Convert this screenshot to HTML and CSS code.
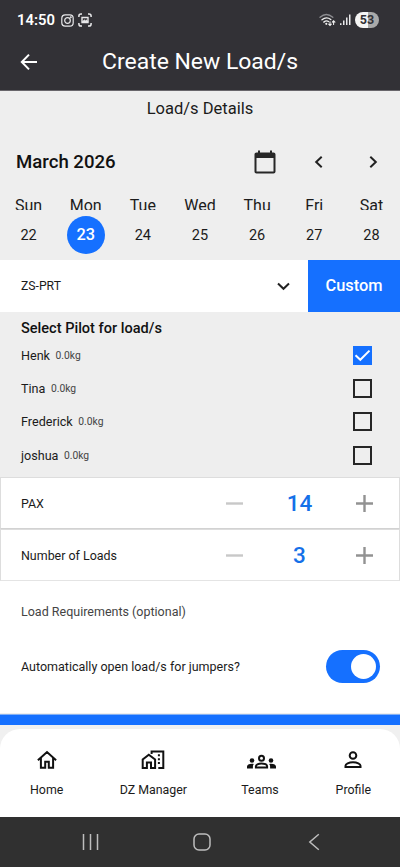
FILE: index.html
```html
<!DOCTYPE html>
<html lang="en">
<head>
<meta charset="utf-8">
<meta name="viewport" content="width=device-width, initial-scale=1">
<title>Create New Load/s</title>
<link rel="stylesheet" href="styles.css">
</head>
<body>
<div class="screen">
  <div class="top">
    <div class="status">
      <span class="clock">14:50</span>
      <svg class="insta" width="13" height="13" viewBox="0 0 13 13" fill="none" stroke="#e8e8ea" stroke-width="1.2"><rect x=".8" y=".8" width="11.4" height="11.4" rx="3.4"/><circle cx="6.5" cy="6.5" r="2.8"/><circle cx="9.8" cy="3.2" r=".4"/></svg>
      <svg class="capture" width="14" height="14" viewBox="0 0 14 14" fill="none" stroke="#e8e8ea" stroke-width="1.5"><path d="M.9 4V3Q.9.9 3 .9h1M10 .9h1q2.100 0 2.100 2.100v1M13.100 10v1q0 2.100-2.100 2.100h-1M4 13.100H3Q.9 13.100.9 11v-1"/><path d="M4 4.500h6v5H4z" stroke-width="1.400"/><path d="M4 9l2.200-2.300 1.200 1 1-.9L10 8.500V9z" fill="#e8e8ea" stroke-width=".5"/></svg>
      <span class="spacer"></span>
      <svg class="wifi" width="17" height="14" viewBox="0 0 17 14" fill="none" stroke-linecap="round"><path d="M1 4.300Q7.300-1.200 13.800 4.300" stroke="#8c8c90" stroke-width="1.300"/><path d="M3 6.800Q7.300 3.100 11.800 6.500M4.800 9.100Q7.300 7 9.500 8.500" stroke="#f0f0f0" stroke-width="1.400"/><circle cx="7.300" cy="10.800" r="1.100" fill="#f0f0f0"/><path d="M11 8.800v3.500M9.700 11.200l1.300 1.300 1.300-1.300M14.600 11.500V8M13.300 9.200l1.300-1.300 1.300 1.300" stroke="#f0f0f0" stroke-width="1.100"/></svg>
      <svg class="signal" width="11" height="12" viewBox="0 0 11 12" fill="#e8e8ea"><path d="M0 9.200h1.500V11H0zM3 6.500h1.500V11H3zM6 3.500h1.500V11H6zM9 .5h1.500V11H9z"/></svg>
      <span class="battery">53</span>
    </div>
    <div class="appbar">
      <svg class="back" width="18" height="18" viewBox="0 0 18 18" fill="none" stroke="#fff" stroke-width="2"><path d="M17 9H2.200M9 1.600L1.800 9 9 16.400"/></svg>
      <h1>Create New Load/s</h1>
    </div>
  </div>

  <h2 class="section-title">Load/s Details</h2>
  <div class="month">
    <span class="month-name">March 2026</span>
    <svg class="calendar" width="22" height="24" viewBox="0 0 22 24"><path fill="#272727" d="M19.500 2.500H18V.5h-2v2H6v-2H4v2H2.500C1.400 2.500.5 3.400.5 4.500v17c0 1.100.9 2 2 2h17c1.100 0 2-.9 2-2v-17c0-1.100-.9-2-2-2zm0 19h-17V8h17z"/></svg>
    <svg class="prev" width="9" height="12" viewBox="0 0 9 12" fill="none" stroke="#222" stroke-width="2"><path d="M7.700.8L2.200 6l5.500 5.200"/></svg>
    <svg class="next" width="9" height="12" viewBox="0 0 9 12" fill="none" stroke="#222" stroke-width="2"><path d="M1.300.8L6.800 6l-5.500 5.200"/></svg>
  </div>
  <div class="week names"><span>Sun</span><span>Mon</span><span>Tue</span><span>Wed</span><span>Thu</span><span>Fri</span><span>Sat</span></div>
  <div class="week days"><span>22</span><span class="selected">23</span><span>24</span><span>25</span><span>26</span><span>27</span><span>28</span></div>

  <div class="aircraft">
    <div class="select"><span>ZS-PRT</span>
      <svg width="13" height="9" viewBox="0 0 13 9" fill="none" stroke="#222" stroke-width="2"><path d="M1 1.500l5.500 5.300L12 1.500"/></svg>
    </div>
    <div class="custom">Custom</div>
  </div>

  <div class="pilots">
    <h3>Select Pilot for load/s</h3>
    <div class="pilot"><span>Henk</span><small>0.0kg</small><i class="box checked"><svg width="19" height="19" viewBox="0 0 19 19" fill="none" stroke="#fff" stroke-width="2"><path d="M2.500 9.300l4.800 4.500 9.200-9.200"/></svg></i></div>
    <div class="pilot"><span>Tina</span><small>0.0kg</small><i class="box"></i></div>
    <div class="pilot"><span>Frederick</span><small>0.0kg</small><i class="box"></i></div>
    <div class="pilot"><span>joshua</span><small>0.0kg</small><i class="box"></i></div>
  </div>

  <div class="counter">
    <span class="label">PAX</span>
    <svg width="17" height="17" viewBox="0 0 17 17"><path d="M0 8.500h17" stroke="#c8c8c8" stroke-width="2.400"/></svg>
    <span class="value">14</span>
    <svg width="17" height="17" viewBox="0 0 17 17"><path d="M0 8.500h17M8.500 0v17" stroke="#929292" stroke-width="2.400"/></svg>
  </div>
  <div class="counter last">
    <span class="label">Number of Loads</span>
    <svg width="17" height="17" viewBox="0 0 17 17"><path d="M0 8.500h17" stroke="#c8c8c8" stroke-width="2.400"/></svg>
    <span class="value">3</span>
    <svg width="17" height="17" viewBox="0 0 17 17"><path d="M0 8.500h17M8.500 0v17" stroke="#929292" stroke-width="2.400"/></svg>
  </div>

  <div class="requirements">Load Requirements (optional)</div>
  <div class="auto"><span>Automatically open load/s for jumpers?</span><span class="toggle"><i></i></span></div>
  <div class="submit"></div>

  <div class="nav-wrap">
    <div class="nav">
      <div class="tab"><svg width="20" height="20" viewBox="0 0 20 20" fill="none" stroke="#111" stroke-width="2"><path d="M.9 10.300L10 2.100l9.100 8.200M3.900 8v9.700h4.300v-6h3.600v6h4.300V8"/></svg><span>Home</span></div>
      <div class="tab wide"><svg width="24" height="20" viewBox="0 0 24 20" fill="none" stroke="#111" stroke-width="2"><path d="M1.700 18.100V9.500l6.100-4.800 6.300 4.800v8.600H10v-5.700H5.900v5.700z"/><path d="M10.600 3.900V1.400h11.700v16.700h-5"/><path d="M17.900 4.300v2M17.900 8.200v2M17.900 12.100v2" stroke-width="2"/></svg><span>DZ Manager</span></div>
      <div class="tab teams"><svg width="29" height="20" viewBox="0 0 29 20"><g fill="none" stroke="#111" stroke-width="2"><circle cx="14.500" cy="8.200" r="2.500"/><path d="M8.900 17.500v-1.200c0-1.500 2.300-2.800 5.600-2.800s5.600 1.300 5.600 2.800v1.200z"/></g><g fill="#111"><circle cx="5" cy="10.500" r="2.300"/><circle cx="24" cy="10.500" r="2.300"/><path d="M0 18.500v-2c0-1.700 2-2.800 4.900-2.800.7 0 1.300.1 1.900.2-.7.800-.9 1.600-.9 2.600v2zM29 18.500v-2c0-1.700-2-2.800-4.900-2.800-.7 0-1.300.1-1.900.2.7.8.9 1.600.9 2.600v2z"/></g></svg><span>Teams</span></div>
      <div class="tab"><svg width="18" height="20" viewBox="0 0 18 20" fill="none" stroke="#111" stroke-width="2"><circle cx="9" cy="5.500" r="3.300"/><path d="M1.500 17.100v-1.300c0-2 3.400-3.500 7.500-3.500s7.500 1.500 7.500 3.500v1.300z"/></svg><span>Profile</span></div>
    </div>
  </div>
  <div class="system">
    <svg width="17" height="18" viewBox="0 0 17 18" stroke="#bdbdbd" stroke-width="1.500"><path d="M1.500 1v16M8.500 1v16M15.500 1v16"/></svg>
    <svg width="18" height="18" viewBox="0 0 18 18" fill="none" stroke="#bdbdbd" stroke-width="1.500"><rect x="1" y="1" width="16" height="16" rx="5"/></svg>
    <svg width="12" height="18" viewBox="0 0 12 18" fill="none" stroke="#bdbdbd" stroke-width="1.500"><path d="M10.800 1.200L1.800 9l9 7.800"/></svg>
  </div>
</div>
</body>
</html>
```
FILE: styles.css
```css
* { box-sizing: border-box; }
body { margin: 0; font-family: Roboto, "Liberation Sans", sans-serif; color: #1b1b1b; background: #fff; }
h1, h2, h3 { margin: 0; font-weight: 400; }
svg { display: block; flex: none; }
.screen { width: 400px; height: 867px; display: flex; flex-direction: column; overflow: hidden; background: #eee; }
.screen > * { flex: none; }

.top { height: 91px; background: #323136; border-bottom: 1px solid #68666b; color: #fff; }
.status { height: 40px; display: flex; align-items: center; padding: 0 21px 0 17px; }
.clock { font-size: 14.800px; font-weight: 600; width: 44px; }
.capture { margin-left: 4px; }
.spacer { flex: 1; }
.wifi { margin-right: 1px; }
.signal { margin: 0 4px 0 3px; }
.battery { width: 24px; height: 16px; border-radius: 8px; background: linear-gradient(90deg, #f5f5f5 53%, #aaa 53%); color: #323136; font-size: 12.500px; line-height: 16px; font-weight: 700; text-align: center; }
.appbar { height: 43px; display: flex; align-items: center; padding-left: 20px; }
.appbar h1 { margin-left: 64px; font-size: 22.950px; line-height: 30px; white-space: nowrap; }

.section-title { height: 35px; line-height: 35px; text-align: center; font-size: 16.550px; }
.month { height: 72px; display: flex; align-items: center; padding: 0 22px 0 16px; }
.month-name { flex: 1; font-size: 18.600px; font-weight: 500; color: #111; }
.prev { margin-left: 38px; }
.next { margin-left: 46px; }
.week { display: grid; grid-template-columns: repeat(7, 1fr); justify-items: center; }
.names { height: 12px; overflow: hidden; font-size: 16px; line-height: 16px; }
.days { height: 50px; align-items: center; font-size: 14.500px; }
.selected { width: 38px; height: 38px; line-height: 38px; border-radius: 50%; background: #1570ff; color: #fff; font-size: 16.300px; font-weight: 500; text-align: center; }

.aircraft { height: 52px; display: flex; }
.select { flex: 1; display: flex; align-items: center; justify-content: space-between; padding: 0 18px 0 21px; background: #fff; font-size: 12.200px; }
.custom { width: 92px; line-height: 52px; background: #1570ff; color: #fff; font-size: 16.400px; font-weight: 500; text-align: center; }

.pilots { height: 165px; padding: 2.500px 28px 0 21px; }
.pilots h3 { height: 24px; line-height: 28px; font-size: 14.550px; font-weight: 500; color: #111; }
.pilot { height: 33.300px; display: flex; align-items: center; font-size: 12.600px; }
.pilot small { margin-left: 5.500px; font-size: 10.300px; color: #444; }
.box { width: 19px; height: 19px; margin-left: auto; border: 2px solid #262626; }
.checked { border: 0; background: #1570ff; }

.counter { height: 52px; display: flex; align-items: center; padding: 0 26px 0 20px; background: #fff; border: 1px solid #ddd; border-bottom-color: #d2d2d2; font-size: 12.450px; }
.last { border-bottom-color: #e4e4e4; }
.label { flex: 1; }
.value { width: 113px; text-align: center; color: #1570e8; font-size: 22.500px; font-weight: 500; }

.requirements { height: 60px; padding-left: 21px; line-height: 61px; background: #fff; font-size: 12.500px; color: #444; }
.auto { height: 72px; display: flex; align-items: flex-start; justify-content: space-between; padding: 9px 20px 0 21px; background: #fff; font-size: 12.500px; line-height: 33px; }
.toggle { width: 54px; height: 33px; padding: 4px; border-radius: 17px; background: #1570ff; }
.toggle i { display: block; width: 25px; height: 25px; margin-left: auto; border-radius: 50%; background: #fff; }
.submit { height: 11px; margin-top: 1px; background: #1570ff; border-top: 1px solid #83b0f4; }
.nav-wrap { height: 92px; padding-top: 4px; background: #f0f0f0; }
.nav { height: 88px; display: flex; border-radius: 20px 20px 0 0; background: #fff; }
.tab { flex: 1; display: flex; flex-direction: column; align-items: center; padding-top: 21px; font-size: 12.400px; }
.tab.wide { flex: 0 0 120px; }
.teams svg { margin-left: 3px; }
.tab span { margin-top: 11px; line-height: 18px; }
.system { flex: 1; display: flex; align-items: center; padding-left: 82px; background: #303030; }
.system svg + svg { margin-left: 94px; }
.system svg:last-child { margin-left: 97px; }
```
